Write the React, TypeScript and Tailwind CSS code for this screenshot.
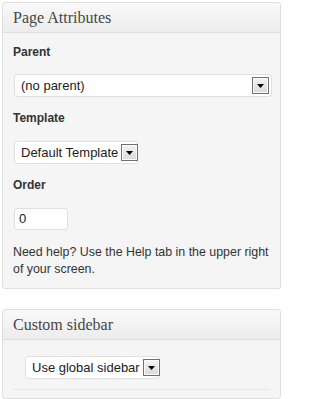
import React from "react";

function Arrow() {
  return (
    <span className="flex h-[17px] w-[17px] shrink-0 items-center justify-center border border-[#707070] bg-gradient-to-b from-[#f4f4f4] to-[#d9d9d9] shadow-[inset_0_0_0_1px_#fafafa]">
      <svg width="7" height="4" viewBox="0 0 7 4">
        <path d="M0 0H7L3.5 4Z" fill="#000" />
      </svg>
    </span>
  );
}

function Select({ label, className }: { label: string; className: string }) {
  return (
    <div
      className={`flex h-[23px] items-center rounded-[3px] border border-[#dfdfdf] bg-white pl-[6px] pr-[2px] ${className}`}
    >
      <span className="flex-1 whitespace-nowrap pr-[3px] text-[13px] leading-none text-[#222]">{label}</span>
      <Arrow />
    </div>
  );
}

function Panel({ title, children }: { title: string; children: React.ReactNode }) {
  return (
    <div className="rounded-[3px] border border-[#dfdfdf] bg-[#f5f5f5]">
      <div className="flex h-[30px] items-center rounded-t-[3px] border-b border-[#dfdfdf] bg-gradient-to-b from-[#f9f9f9] to-[#ececec] pl-[10px] pt-[1px]">
        <h3
          className="text-[16px] leading-none text-[#464646]"
          style={{ fontFamily: '"Liberation Serif", serif' }}
        >
          {title}
        </h3>
      </div>
      {children}
    </div>
  );
}

export default function App() {
  return (
    <div
      className="h-[399px] w-[283px] bg-white px-[2px] pt-[2px] text-[#333]"
      style={{ fontFamily: '"Liberation Sans", Arial, sans-serif' }}
    >
      <Panel title="Page Attributes">
        <div className="flex flex-col px-[10px] pb-[10px] pt-[11px]">
          <p className="text-[12px] font-bold leading-[17px]">Parent</p>
          <Select label="(no parent)" className="ml-[1px] mt-[13px] w-[258px]" />
          <p className="mt-[13px] text-[12px] font-bold leading-[17px]">Template</p>
          <Select label="Default Template" className="ml-[1px] mt-[14px] w-[124px]" />
          <p className="mt-[13px] text-[12px] font-bold leading-[17px]">Order</p>
          <div className="ml-[1px] mt-[14px] flex h-[22px] w-[54px] items-center rounded-[3px] border border-[#dfdfdf] bg-white pl-[4px] text-[13px] text-[#222]">
            0
          </div>
          <p className="mt-[14px] text-[12.4px] leading-[17px]">
            Need help? Use the Help tab in the upper right of your screen.
          </p>
        </div>
      </Panel>
      <div className="mt-[20px]">
        <Panel title="Custom sidebar">
          <div className="px-[10px] pb-[8px] pt-[16px]">
            <Select label="Use global sidebar" className="ml-[12px] w-[134px]" />
            <div className="mt-[10px] border-t border-[#e6e6e6]" />
          </div>
        </Panel>
      </div>
    </div>
  );
}
